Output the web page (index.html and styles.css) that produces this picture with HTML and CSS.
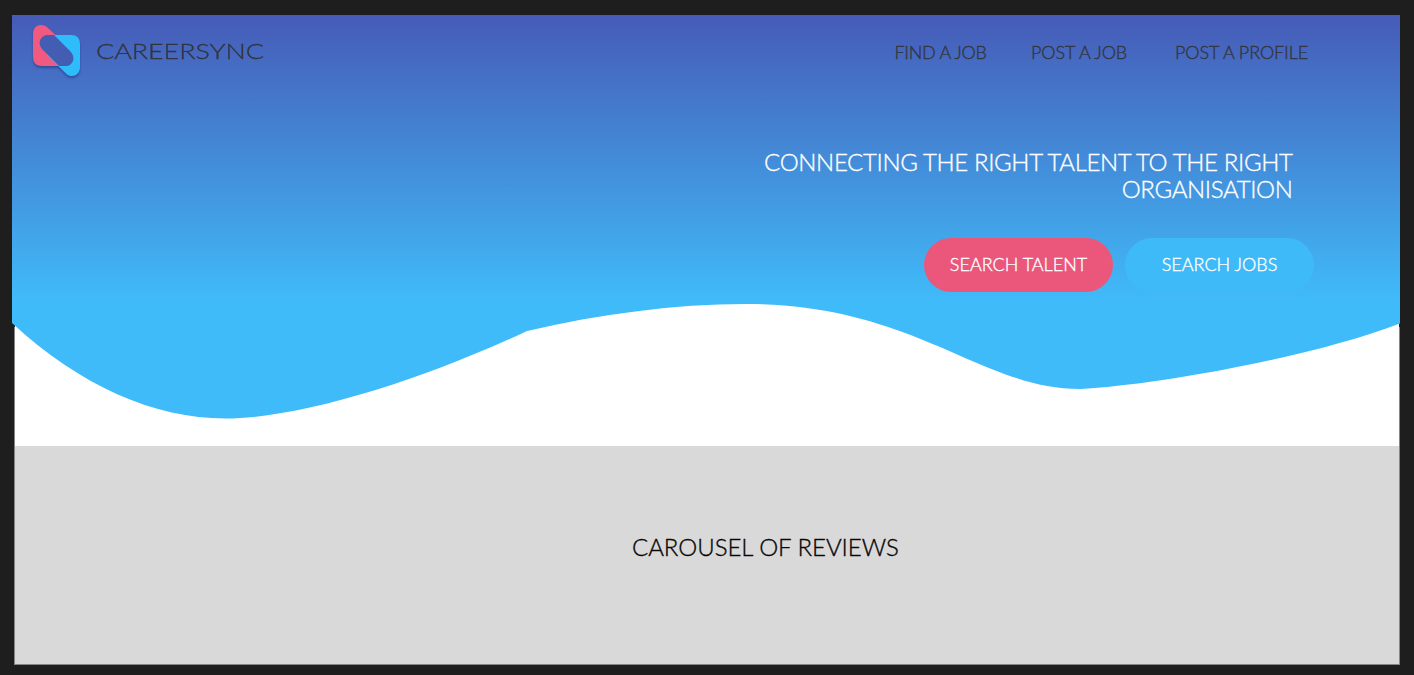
FILE: index.html
```html
<!DOCTYPE html>
<html lang="en">
<head>
<meta charset="utf-8">
<title>CareerSync</title>
<link rel="stylesheet" href="styles.css">
</head>
<body>
<main class="page">
  <section class="hero">
    <svg class="wave" viewBox="0 0 1388 431" aria-hidden="true">
      <defs>
        <linearGradient id="sky" gradientUnits="userSpaceOnUse" x1="0" y1="0" x2="0" y2="287">
          <stop offset="0" stop-color="#465bb7"/>
          <stop offset="1" stop-color="#40bbf9"/>
        </linearGradient>
      </defs>
      <path fill="url(#sky)" d="M0 0H1388V308.500C1298 343 1138 371 1068 374C968 374 903 289 733 289C663 289 588 299 515 316C408 366 288 403.500 213 403.500C143 403.500 68 371 0 308Z"/>
    </svg>
    <header class="topbar">
      <a class="brand">
        <svg class="logo" width="56" height="60" viewBox="0 0 56 60" aria-hidden="true">
          <path fill="#f05a80" d="M4 13C4 4 13 1.500 19 7L50 36L31 45H13Q4 45 4 36Z"/>
          <path fill="#2fbcfb" d="M24 14H42Q51 14 51 23V46C51 54 43 58 37 52.500L18 34Z"/>
          <path fill="#435db3" d="M19 14H25L41 30C48 37 43 45 37 45H30L14 29C7 22 12 14 19 14Z"/>
        </svg>
        <span class="wordmark">CAREERSYNC</span>
      </a>
      <nav class="nav">
        <a class="find">FIND A JOB</a>
        <a class="post">POST A JOB</a>
        <a class="profile">POST A PROFILE</a>
      </nav>
    </header>
    <h1 class="headline"><span class="line1">CONNECTING THE RIGHT TALENT TO THE RIGHT</span><span class="line2">ORGANISATION</span></h1>
    <div class="actions">
      <a class="button talent"><span>SEARCH TALENT</span></a>
      <a class="button jobs"><span>SEARCH JOBS</span></a>
    </div>
  </section>
  <section class="reviews"><h2>CAROUSEL OF REVIEWS</h2></section>
</main>
</body>
</html>
```
FILE: styles.css
```css
* { box-sizing: border-box; }
body {
  margin: 0;
  height: 675px;
  padding: 15px 14px 0 12px;
  overflow: hidden;
  background: #1e1e1e;
  font-family: Lato, sans-serif;
  font-weight: 300;
  -webkit-text-stroke: .35px currentColor;
}
.page { width: 1388px; }
.hero {
  position: relative;
  height: 431px;
  background:
    linear-gradient(#fff, #fff) 3px 280px / 1384px 151px no-repeat,
    linear-gradient(#858585, #858585) 2px 312px / 1386px 119px no-repeat;
}
.wave {
  position: absolute;
  inset: 0;
  width: 1388px;
  height: 431px;
}
.topbar {
  position: relative;
  display: flex;
  justify-content: space-between;
  height: 76px;
  padding: 6px 0 0 17px;
}
.brand { display: flex; }
.logo {
  flex: none;
  overflow: visible;
  filter: drop-shadow(0 2px 1px rgba(25, 45, 120, .5));
}
.wordmark {
  width: 168px;
  margin: 14px 0 0 10.5px;
  color: #34363f;
  font-size: 22px;
  line-height: 32px;
  white-space: nowrap;
  transform: scaleX(1.22);
  transform-origin: left;
}
.nav {
  display: grid;
  grid-template-columns: 136.5px 144px 225px;
  padding-top: 18px;
  color: #333640;
  font-size: 18px;
  line-height: 26px;
  letter-spacing: -.1px;
  white-space: nowrap;
}
.find { letter-spacing: -.3px; }
.headline {
  position: relative;
  margin: 57px 107.5px 0 0;
  color: #fff;
  font-size: 24px;
  line-height: 27px;
  font-weight: 300;
  letter-spacing: -.35px;
  text-align: right;
}
.headline span { display: block; }
.actions {
  position: relative;
  display: flex;
  justify-content: flex-end;
  gap: 12px;
  margin: 36px 86px 0 0;
}
.button {
  display: flex;
  justify-content: center;
  width: 189px;
  height: 54px;
  border-radius: 27px;
  color: #fff;
  font-size: 18px;
  line-height: 53px;
}
.talent { background: #eb577b; }
.jobs { background: #3fbaf8; }
.reviews {
  width: 1386px;
  height: 219px;
  margin-left: 2px;
  border: solid #858585;
  border-width: 0 1px 1px;
  background: #d9d9d9;
}
.reviews h2 {
  margin: 0;
  padding: 85px 0 0 617px;
  color: #080808;
  font-size: 24px;
  line-height: 32px;
  font-weight: 300;
  letter-spacing: -.05px;
}
```
